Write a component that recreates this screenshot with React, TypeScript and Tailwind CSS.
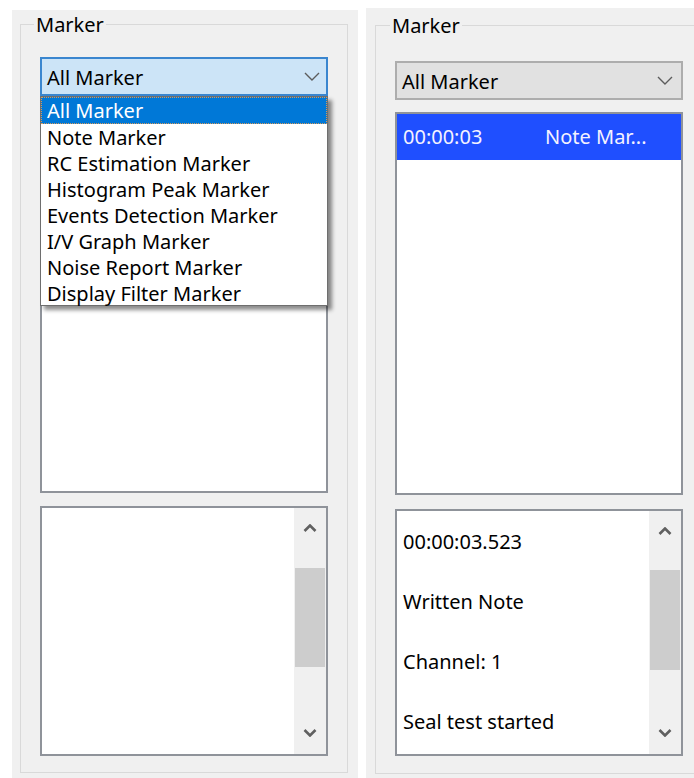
import React from "react";

const FONT = { fontFamily: '"Noto Sans", "Open Sans", sans-serif' };

const MARKER_TYPES = [
  "All Marker",
  "Note Marker",
  "RC Estimation Marker",
  "Histogram Peak Marker",
  "Events Detection Marker",
  "I/V Graph Marker",
  "Noise Report Marker",
  "Display Filter Marker",
];

const DETAIL_LINES = ["00:00:03.523", "Written Note", "Channel: 1", "Seal test started"];

function Chevron() {
  return (
    <svg width="16" height="9" viewBox="0 0 16 9" className="shrink-0">
      <polyline points="1,1 8,8 15,1" fill="none" stroke="#5c5c5c" strokeWidth="1.4" />
    </svg>
  );
}

function ScrollArrow({ up }: { up?: boolean }) {
  return (
    <svg width="14" height="8" viewBox="0 0 14 8">
      <polyline
        points={up ? "1.5,7 7,1.5 12.5,7" : "1.5,1 7,6.5 12.5,1"}
        fill="none"
        stroke="#606060"
        strokeWidth="2.6"
      />
    </svg>
  );
}

// vertical scrollbar with the thumb part way down
function ScrollBar({ thumbTop, thumbHeight }: { thumbTop: number; thumbHeight: number }) {
  return (
    <div className="w-[32px] h-full bg-[#f0f0f0] flex flex-col items-center">
      <div className="h-[24px] flex items-end justify-center">
        <ScrollArrow up />
      </div>
      <div className="w-full px-[1px]" style={{ marginTop: thumbTop - 24 }}>
        <div className="w-full bg-[#cdcdcd]" style={{ height: thumbHeight }} />
      </div>
      <div className="flex-1" />
      <div className="h-[26px] flex items-start justify-center pt-[1px]">
        <ScrollArrow />
      </div>
    </div>
  );
}

function GroupBox({ children, legendOffset }: { children: React.ReactNode; legendOffset: string }) {
  return (
    <fieldset className="h-[762px] border border-[#d9d9d9] pl-[19px] pr-[19px]">
      <legend className={`${legendOffset} px-[2px] leading-[26px] text-[20px] text-black`}>
        <span className="relative top-[1px]">Marker</span>
      </legend>
      {children}
    </fieldset>
  );
}

function OpenDropdown() {
  return (
    <div className="relative">
      <div className="h-[39px] border-2 border-[#3a86cf] bg-[#cce4f7] flex items-center justify-between pl-[5px] pr-[6px]">
        <span className="text-[20px] text-black pt-[3px]">All Marker</span>
        <Chevron />
      </div>
      <div className="absolute top-full left-0 w-[288px] h-[210px] bg-white border border-[#6e6e6e] shadow-[4px_4px_4px_rgba(0,0,0,0.45)] z-10">
        {MARKER_TYPES.map((m, i) =>
          i === 0 ? (
            <div
              key={m}
              className="h-[27px] bg-[#0078d7] border border-dotted border-[#d49a5c] pl-[5px] pt-[1px] leading-[24px] text-[20px] text-white"
            >
              {m}
            </div>
          ) : (
            <div key={m} className="h-[26px] pl-[6px] pt-[2px] leading-[24px] text-[20px] text-black">
              {m}
            </div>
          )
        )}
      </div>
    </div>
  );
}

export default function App() {
  return (
    <div className="w-[694px] h-[778px] bg-white overflow-hidden flex gap-[8px] pl-[12px]" style={FONT}>
      {/* left panel: filter combo opened */}
      <div className="mt-[10px] w-[346px] h-[768px] shrink-0 bg-[#f0f0f0] pt-[1px] pl-[8px] pr-[10px]">
        <GroupBox legendOffset="-ml-[6px]">
          <div className="mt-[20px]">
            <OpenDropdown />
          </div>
          <div className="mt-[12px] h-[385px] border-2 border-[#8f939a] bg-white" />
          <div className="mt-[13px] h-[250px] border-2 border-[#8f939a] bg-white flex justify-end">
            <ScrollBar thumbTop={60} thumbHeight={99} />
          </div>
        </GroupBox>
      </div>

      {/* right panel: marker list with details */}
      <div className="mt-[8px] w-[346px] h-[770px] shrink-0 bg-[#f0f0f0] pt-[4px] pl-[9px] pr-[9px]">
        <GroupBox legendOffset="-ml-[5px]">
          <div className="mt-[23px] h-[39px] border-2 border-[#adadad] bg-[#e1e1e1] flex items-center justify-between pl-[5px] pr-[8px]">
            <span className="text-[20px] text-black pt-[2px]">All Marker</span>
            <Chevron />
          </div>
          <div className="mt-[12px] h-[383px] border-2 border-[#8f939a] bg-white">
            <div className="h-[46px] bg-[#1f4fff] flex items-center text-[20px] text-[#f4f2ff]">
              <span className="w-[148px] pl-[6px]">00:00:03</span>
              <span>Note Mar...</span>
            </div>
          </div>
          <div className="mt-[14px] h-[247px] border-2 border-[#8f939a] bg-white flex">
            <div className="flex-1 pl-[6px] pt-[1px]">
              {DETAIL_LINES.map((line) => (
                <div key={line} className="leading-[60px] text-[20px] text-black whitespace-nowrap">
                  {line}
                </div>
              ))}
            </div>
            <ScrollBar thumbTop={59} thumbHeight={100} />
          </div>
        </GroupBox>
      </div>
    </div>
  );
}
